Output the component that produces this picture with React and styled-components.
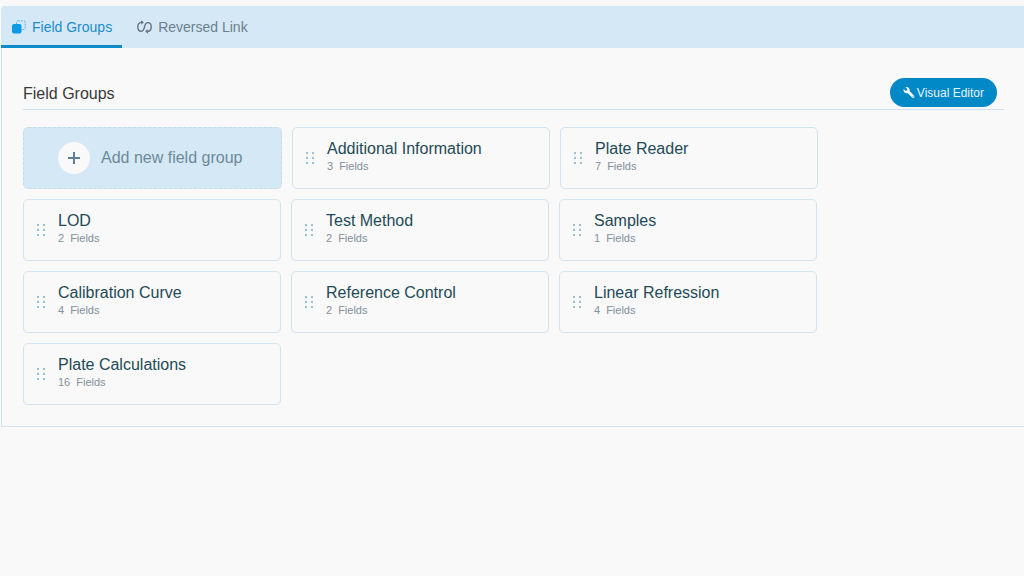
import React, { useState } from "react";
import styled, { createGlobalStyle } from "styled-components";
import { FaWrench } from "react-icons/fa";

const GlobalStyle = createGlobalStyle`
  * {
    box-sizing: border-box;
  }

  body {
    margin: 0;
    background-color: #f9f9f9;
    font-family: "Liberation Sans", Arial, sans-serif;
  }

  button {
    font-family: inherit;
    cursor: pointer;
  }
`;

const Page = styled.main`
  padding: 6px 0 0 1px;
`;

const TabBar = styled.nav`
  display: flex;
  gap: 4px;
  height: 42px;
  background-color: #d5e8f6;
  border-top-left-radius: 4px;
`;

const Tab = styled.button`
  display: flex;
  align-items: center;
  gap: 6px;
  padding: 3px 10px 0 11px;
  border: none;
  border-bottom: 3px solid ${(props) => (props.$active ? "#0d8ccb" : "transparent")};
  background: none;
  color: ${(props) => (props.$active ? "#1a8dc9" : "#6b7f8c")};
  font-size: 14px;
  line-height: 18px;
`;

const Panel = styled.section`
  padding: 30px 20px 21px 21px;
  border-left: 1px solid #cfe3f0;
  border-bottom: 1px solid #d3e2ec;
`;

const PanelHeader = styled.header`
  display: flex;
  align-items: center;
  justify-content: space-between;
  padding: 0 7px 2px 0;
  border-bottom: 1px solid #cbe3f3;
`;

const PanelTitle = styled.h2`
  margin: 0;
  padding-top: 2px;
  color: #3a3a3a;
  font-size: 16px;
  font-weight: 400;
  line-height: 20px;
`;

const EditorButton = styled.button`
  display: flex;
  align-items: center;
  gap: 2px;
  height: 29px;
  padding: 0 13px;
  border: none;
  border-radius: 15px;
  background-color: #0088c7;
  color: #e4f3fb;
  font-size: 12px;
`;

const WrenchIcon = styled(FaWrench)`
  width: 12px;
  height: 11px;
  color: #fff;
  transform: scaleX(-1);
`;

const Groups = styled.div`
  display: flex;
  flex-wrap: wrap;
  gap: 10px;
  padding-top: 17px;
`;

const AddGroup = styled.button`
  display: flex;
  align-items: center;
  gap: 11px;
  width: 259px;
  height: 62px;
  padding: 0 34px;
  border: 1px dashed #c3dcec;
  border-radius: 5px;
  background-color: #d5e8f6;
  color: #6c8a99;
  font-size: 16px;
`;

const PlusCircle = styled.span`
  display: flex;
  align-items: center;
  justify-content: center;
  width: 32px;
  height: 32px;
  border-radius: 50%;
  background-color: #f9f9f9;
`;

const GroupCard = styled.article`
  display: flex;
  align-items: center;
  gap: 12px;
  width: 258px;
  height: 62px;
  padding: 0 13px;
  border: 1px solid #d0e4f1;
  border-radius: 5px;
`;

const GroupText = styled.div`
  padding-bottom: 2px;
`;

const GroupName = styled.h3`
  margin: 0;
  color: #1f4a56;
  font-size: 16px;
  font-weight: 400;
  line-height: 18px;
`;

const FieldCount = styled.p`
  display: flex;
  gap: 6px;
  margin: 0;
  color: #81909d;
  font-size: 11px;
  line-height: 16px;
`;

const groups = [
  { name: "Additional Information", fields: 3 },
  { name: "Plate Reader", fields: 7 },
  { name: "LOD", fields: 2 },
  { name: "Test Method", fields: 2 },
  { name: "Samples", fields: 1 },
  { name: "Calibration Curve", fields: 4 },
  { name: "Reference Control", fields: 2 },
  { name: "Linear Refression", fields: 4 },
  { name: "Plate Calculations", fields: 16 },
];

function GroupsIcon() {
  return (
    <svg width="14" height="14" viewBox="0 0 14 14" aria-hidden="true">
      <rect x="4.5" y="0.8" width="8.7" height="8.7" rx="1.5" fill="none" stroke="#58b5e6" strokeWidth="1" strokeDasharray="2 1" />
      <rect x="0" y="4" width="9.5" height="9.5" rx="2" fill="#0d9be6" />
    </svg>
  );
}

function LinkIcon() {
  return (
    <svg width="15" height="14" viewBox="0 0 15 14" fill="none" stroke="#60737f" strokeWidth="1.4" aria-hidden="true">
      <path d="M4.6 2.4C2 2.6 0.8 4.6 0.8 7C0.8 9.6 2.1 11.3 4.2 11.3C6.6 11.3 7 9.2 7.5 7C8 4.6 8.6 2.6 10.8 2.6C12.9 2.6 14.2 4.4 14.2 7C14.2 9.4 13 11.2 10.8 11.4" />
      <path d="M3.8 0.2L6.8 2.3L4.4 4.8ZM11.2 13.8L8.2 11.6L10.6 9.1Z" fill="#60737f" stroke="none" />
    </svg>
  );
}

function PlusIcon() {
  return (
    <svg width="14" height="14" viewBox="0 0 14 14" aria-hidden="true">
      <path d="M7 1V13M1 7H13" stroke="#5f8193" strokeWidth="2" />
    </svg>
  );
}

function DragDots() {
  return (
    <svg width="9" height="14" viewBox="0 0 9 14" fill="#86bad0" aria-hidden="true">
      {[1, 6, 11].map((y) => (
        <React.Fragment key={y}>
          <rect x="0" y={y} width="2" height="2" rx="0.4" />
          <rect x="6" y={y} width="2" height="2" rx="0.4" />
        </React.Fragment>
      ))}
    </svg>
  );
}

function App() {
  const [tab, setTab] = useState("groups");

  return (
    <Page>
      <GlobalStyle />
      <TabBar>
        <Tab $active={tab === "groups"} onClick={() => setTab("groups")}>
          <GroupsIcon />
          Field Groups
        </Tab>
        <Tab $active={tab === "links"} onClick={() => setTab("links")}>
          <LinkIcon />
          Reversed Link
        </Tab>
      </TabBar>
      <Panel>
        <PanelHeader>
          <PanelTitle>Field Groups</PanelTitle>
          <EditorButton>
            <WrenchIcon aria-hidden="true" />
            Visual Editor
          </EditorButton>
        </PanelHeader>
        <Groups>
          <AddGroup>
            <PlusCircle>
              <PlusIcon />
            </PlusCircle>
            Add new field group
          </AddGroup>
          {groups.map((group) => (
            <GroupCard key={group.name}>
              <DragDots />
              <GroupText>
                <GroupName>{group.name}</GroupName>
                <FieldCount>
                  <span>{group.fields}</span>
                  <span>Fields</span>
                </FieldCount>
              </GroupText>
            </GroupCard>
          ))}
        </Groups>
      </Panel>
    </Page>
  );
}

export default App;
